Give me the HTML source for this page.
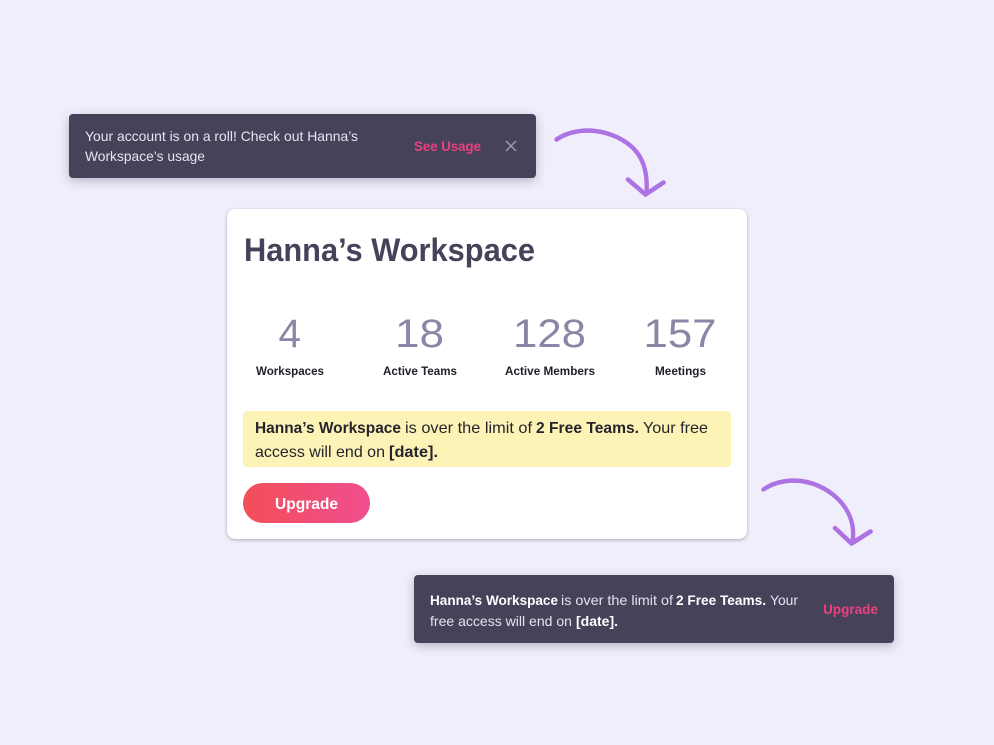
<!DOCTYPE html>
<html lang="en">
<head>
<meta charset="utf-8">
<title>Hanna's Workspace</title>
<style>
html,body{margin:0;padding:0;width:994px;height:745px;overflow:hidden;background:#f0eefb;}
.box{position:absolute;box-sizing:border-box;}
.toast{background:#45425a;border-radius:4px;box-shadow:0 3px 10px rgba(69,66,90,.32);}
svg{position:absolute;left:0;top:0;}
text{font-family:"Liberation Sans",sans-serif;}
.b{font-weight:700;}
</style>
</head>
<body>
<div class="box toast" style="left:69px;top:114px;width:467px;height:64px;"></div>
<div class="box" style="left:227px;top:209px;width:520px;height:330px;background:#fff;border-radius:8px;box-shadow:0 1px 3px rgba(69,66,90,.4);"></div>
<div class="box" style="left:243px;top:411px;width:488px;height:56px;background:#fdf3b6;border-radius:4px;"></div>
<div class="box" style="left:243px;top:483px;width:127px;height:40px;border-radius:20px;background:linear-gradient(90deg,#f34e58,#ef4f8f);"></div>
<div class="box toast" style="left:414px;top:575px;width:480px;height:68px;"></div>

<svg width="994" height="745" viewBox="0 0 994 745" xmlns="http://www.w3.org/2000/svg">
  <!-- toast 1 -->
  <g font-size="14" fill="#e6e4f0">
    <text x="85" y="141" textLength="273" lengthAdjust="spacingAndGlyphs">Your account is on a roll! Check out Hanna’s</text>
    <text x="85" y="161" textLength="120" lengthAdjust="spacingAndGlyphs">Workspace’s usage</text>
  </g>
  <text class="b" x="414" y="151" font-size="14" fill="#ec407f" textLength="67" lengthAdjust="spacingAndGlyphs">See Usage</text>
  <path d="M506 141L516 151M516 141L506 151" stroke="#9d9bae" stroke-width="1.5" fill="none"/>

  <!-- card title -->
  <text class="b" x="244" y="261" font-size="32" fill="#45425a" textLength="291" lengthAdjust="spacingAndGlyphs">Hanna’s Workspace</text>

  <!-- stats -->
  <g font-size="40" fill="#8a86a6">
    <text x="278.500" y="347" textLength="22.500" lengthAdjust="spacingAndGlyphs">4</text>
    <text x="395" y="347" textLength="49" lengthAdjust="spacingAndGlyphs">18</text>
    <text x="513" y="347" textLength="73" lengthAdjust="spacingAndGlyphs">128</text>
    <text x="643.500" y="347" textLength="73" lengthAdjust="spacingAndGlyphs">157</text>
  </g>
  <g font-size="12" fill="#1f1f28" font-weight="700">
    <text x="256" y="375" textLength="68" lengthAdjust="spacingAndGlyphs">Workspaces</text>
    <text x="383" y="375" textLength="74" lengthAdjust="spacingAndGlyphs">Active Teams</text>
    <text x="505" y="375" textLength="90" lengthAdjust="spacingAndGlyphs">Active Members</text>
    <text x="655" y="375" textLength="51" lengthAdjust="spacingAndGlyphs">Meetings</text>
  </g>

  <!-- warning -->
  <g font-size="16" fill="#24242c">
    <text class="b" x="255" y="433" textLength="146" lengthAdjust="spacingAndGlyphs">Hanna’s Workspace</text>
    <text x="405" y="433" textLength="127" lengthAdjust="spacingAndGlyphs">is over the limit of</text>
    <text class="b" x="536" y="433" textLength="103" lengthAdjust="spacingAndGlyphs">2 Free Teams.</text>
    <text x="643" y="433" textLength="65" lengthAdjust="spacingAndGlyphs">Your free</text>
    <text x="255" y="457" textLength="130" lengthAdjust="spacingAndGlyphs">access will end on</text>
    <text class="b" x="389" y="457" textLength="49" lengthAdjust="spacingAndGlyphs">[date].</text>
  </g>

  <!-- button -->
  <text class="b" x="275" y="509" font-size="16" fill="#fff" textLength="63" lengthAdjust="spacingAndGlyphs">Upgrade</text>

  <!-- toast 2 -->
  <g font-size="14" fill="#e6e4f0">
    <text class="b" fill="#fff" x="430" y="605" textLength="128" lengthAdjust="spacingAndGlyphs">Hanna’s Workspace</text>
    <text x="561" y="605" textLength="112" lengthAdjust="spacingAndGlyphs">is over the limit of</text>
    <text class="b" fill="#fff" x="676" y="605" textLength="90" lengthAdjust="spacingAndGlyphs">2 Free Teams.</text>
    <text x="770" y="605" textLength="28" lengthAdjust="spacingAndGlyphs">Your</text>
    <text x="430" y="626" textLength="142" lengthAdjust="spacingAndGlyphs">free access will end on</text>
    <text class="b" fill="#fff" x="576" y="626" textLength="42" lengthAdjust="spacingAndGlyphs">[date].</text>
  </g>
  <text class="b" x="823" y="614" font-size="14" fill="#ec407f" textLength="55" lengthAdjust="spacingAndGlyphs">Upgrade</text>

  <!-- arrows -->
  <g fill="none" stroke="#ad72e3" stroke-linecap="round" stroke-linejoin="round">
    <path d="M556.500 139.500C566 133 577 130.500 589 130.500C605 131 621 137 632 147C643 157 648 172 646.500 193" stroke-width="4.400"/>
    <path d="M628 179.500L645.500 194.500L663.500 182.500" stroke-width="4.600"/>
    <path d="M763.500 489.500C772 483.500 783 480.500 795 480.500C811 481 827 488 838 499C850 511 855 526 852.500 542" stroke-width="4.400"/>
    <path d="M835 528L851.500 543.500L870.500 531.500" stroke-width="4.600"/>
  </g>
</svg>
</body>
</html>
